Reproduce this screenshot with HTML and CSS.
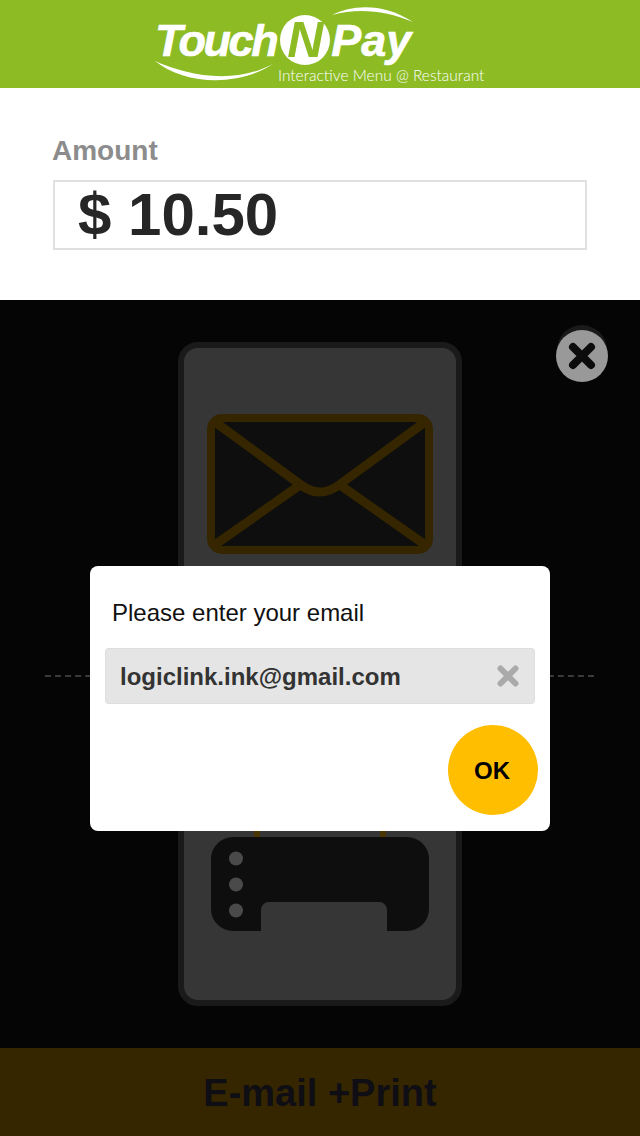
FILE: index.html
```html
<!DOCTYPE html>
<html lang="en">
<head>
<meta charset="utf-8">
<title>TouchNPay</title>
<link rel="stylesheet" href="styles.css">
</head>
<body>
<div class="app">
  <header class="topbar">
    <div class="logo">
      <svg class="logo-swoosh" width="280" height="88" viewBox="0 0 280 88" aria-hidden="true">
        <path class="swoosh" d="M177 15C198 4 230 3 258 22C230 10 202 8 177 15Z"/>
        <path class="swoosh" d="M0 61C30 74 76 86 118 64C82 88 28 84 0 61Z"/>
      </svg>
      <div class="wordmark">
        <span class="touch">Touch</span><span class="logo-n">N</span><span class="pay">Pay</span>
      </div>
      <div class="tagline">Interactive Menu @ Restaurant</div>
    </div>
  </header>

  <section class="amount">
    <div class="amount-label">Amount</div>
    <div class="amount-box">$ 10.50</div>
  </section>

  <main class="stage">
    <div class="dash-line"></div>
    <div class="phone">
      <svg class="envelope" width="226" height="140" viewBox="0 0 226 140" aria-hidden="true">
        <rect class="env-body" x="4" y="4" width="218" height="132" rx="11"/>
        <path class="env-line" d="M8 8L94 71Q113 85 132 71L218 8"/>
        <path class="env-line" d="M9 130L93 71M133 71L217 130"/>
      </svg>
      <svg class="printer" width="218" height="120" viewBox="0 0 218 120" aria-hidden="true">
        <rect class="paper" x="46" y="0" width="126" height="40"/>
        <path class="printer-body" d="M22 26H196A22 22 0 0 1 218 48V98A22 22 0 0 1 196 120H176V99A8 8 0 0 0 168 91H58A8 8 0 0 0 50 99V120H22A22 22 0 0 1 0 98V48A22 22 0 0 1 22 26Z"/>
        <circle class="printer-dot" cx="25" cy="47.5" r="7"/>
        <circle class="printer-dot" cx="25" cy="73.5" r="7"/>
        <circle class="printer-dot" cx="25" cy="99.5" r="7"/>
      </svg>
    </div>
    <button class="close-btn" type="button" aria-label="Close">
      <svg width="30" height="30" viewBox="0 0 30 30" aria-hidden="true">
        <path class="close-x" d="M6 6L24 24M24 6L6 24"/>
      </svg>
    </button>
    <div class="dialog">
      <div class="dialog-title">Please enter your email</div>
      <div class="email-field">
        <span>logiclink.ink@gmail.com</span>
        <svg width="22" height="22" viewBox="0 0 22 22" aria-hidden="true">
          <path class="clear-x" d="M3.5 3.5L18.5 18.5M18.5 3.5L3.5 18.5"/>
        </svg>
      </div>
      <div class="dialog-actions">
        <button class="ok-btn" type="button">OK</button>
      </div>
    </div>
  </main>

  <footer class="action-bar">E-mail +Print</footer>
</div>
</body>
</html>
```
FILE: styles.css
```css
* { box-sizing: border-box; }
html, body { margin: 0; padding: 0; }
body { font-family: "Liberation Sans", Arial, sans-serif; background: #fff; }
.app { width: 640px; height: 1136px; display: flex; flex-direction: column; overflow: hidden; }

.topbar { height: 88px; background: #8cbb24; padding-left: 155px; flex: none; }
.logo { position: relative; width: 340px; height: 88px; }
.logo-swoosh { position: absolute; left: 0; top: 0; }
.swoosh { fill: #fff; }
.wordmark { position: absolute; left: 0; top: 15px; display: flex; align-items: flex-start; height: 50px; font-family: "Liberation Sans", sans-serif; font-weight: 700; font-style: italic; font-size: 45px; color: #fff; line-height: 50px; -webkit-text-stroke: 0.6px #fff; }
.touch { letter-spacing: -2.4px; padding-top: 2px; height: 50px; line-height: 48px; }
.logo-n { width: 50px; height: 50px; border-radius: 50%; background: #fff; color: #8cbb24; -webkit-text-stroke: 0; text-align: center; font-size: 50px; line-height: 50px; margin: 0 1px 0 4px; }
.pay { padding-top: 2px; height: 50px; line-height: 48px; }
.tagline { position: absolute; left: 123px; top: 66px; font-family: "Lato", sans-serif; font-size: 15.5px; line-height: 18px; color: #fff; white-space: nowrap; font-weight: 300; }

.amount { height: 212px; background: #fff; padding: 47px 53px 0 52px; flex: none; }
.amount-label { font-size: 28px; font-weight: 700; line-height: 32px; color: #8c8c8c; }
.amount-box { margin: 13px 0 0 1px; height: 70px; border: 2px solid #e0e0e0; padding-left: 23px; font-size: 60px; font-weight: 700; line-height: 66px; color: #262626; }

.stage { position: relative; flex: 1; background: #050505; display: flex; align-items: center; justify-content: center; }
.dash-line { position: absolute; left: 45px; right: 46px; top: 375px; border-top: 2px dashed #3a3a3a; }
.phone { position: relative; width: 284px; height: 664px; border: 6px solid #1a1a1a; border-radius: 20px; background: #363636; padding: 66px 23px 0; display: flex; flex-direction: column; align-items: flex-start; }
.envelope { display: block; flex: none; }
.env-body { fill: #0e0e0e; stroke: #352600; stroke-width: 8; }
.env-line { fill: none; stroke: #352600; stroke-width: 9; }
.printer { display: block; flex: none; margin: 257px 0 0 4px; }
.paper { fill: none; stroke: #4a3600; stroke-width: 6; }
.printer-body { fill: #0e0e0e; }
.printer-dot { fill: #4a4a4a; }

.close-btn { position: absolute; left: 556px; top: 30px; width: 52px; height: 52px; padding: 0; border: 0; border-radius: 50%; background: #999; box-shadow: 0 -6px 0 -1px #1a1a1a; display: flex; align-items: center; justify-content: center; }
.close-x { fill: none; stroke: #0c0c0c; stroke-width: 8; stroke-linecap: round; }

.dialog { position: absolute; left: 90px; top: 266px; width: 460px; height: 265px; background: #fff; border-radius: 8px; padding: 33px 15px 0; display: flex; flex-direction: column; }
.dialog-title { padding-left: 7px; font-size: 24px; line-height: 28px; color: #111; }
.email-field { margin-top: 21px; height: 56px; background: #e5e5e5; border: 1px dotted #d8d8d8; border-radius: 4px; padding: 2px 15px 0 14px; display: flex; align-items: center; justify-content: space-between; font-size: 24px; font-weight: 700; color: #333; }
.email-field svg { margin-top: -2px; }
.clear-x { fill: none; stroke: #aaa; stroke-width: 6; stroke-linecap: round; }
.dialog-actions { display: flex; justify-content: flex-end; margin-top: 21px; }
.ok-btn { width: 90px; height: 90px; margin-right: -3px; border: 0; border-radius: 50%; background: #ffbe00; font-family: "Liberation Sans", sans-serif; font-size: 24px; font-weight: 700; color: #000; padding: 2px 2px 0 0; }

.action-bar { height: 88px; background: #352600; flex: none; display: flex; align-items: center; justify-content: center; padding-top: 2px; font-size: 38px; font-weight: 700; color: #0e0e14; }
```
